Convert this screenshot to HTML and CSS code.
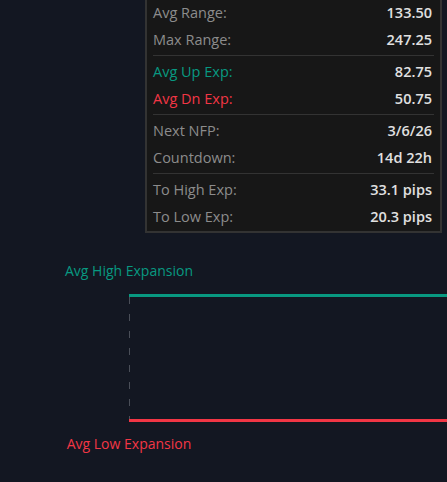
FILE: index.html
```html
<!DOCTYPE html>
<html lang="en">
  <head>
    <meta charset="UTF-8" />
    <meta name="viewport" content="width=device-width, initial-scale=1.0" />
    <title>NFP Expansion</title>
    <link rel="stylesheet" href="styles.css">
  </head>
  <body>
    <section class="stats">
      <div class="stats-row">
        <span class="stats-label">Avg Range:</span>
        <span class="stats-value">133.50</span>
      </div>
      <div class="stats-row">
        <span class="stats-label">Max Range:</span>
        <span class="stats-value">247.25</span>
      </div>
      <hr class="stats-sep" />
      <div class="stats-row">
        <span class="stats-label is-up">Avg Up Exp:</span>
        <span class="stats-value">82.75</span>
      </div>
      <div class="stats-row">
        <span class="stats-label is-down">Avg Dn Exp:</span>
        <span class="stats-value">50.75</span>
      </div>
      <hr class="stats-sep" />
      <div class="stats-row">
        <span class="stats-label">Next NFP:</span>
        <span class="stats-value">3/6/26</span>
      </div>
      <div class="stats-row">
        <span class="stats-label">Countdown:</span>
        <span class="stats-value">14d 22h</span>
      </div>
      <hr class="stats-sep" />
      <div class="stats-row">
        <span class="stats-label">To High Exp:</span>
        <span class="stats-value">33.1 pips</span>
      </div>
      <div class="stats-row">
        <span class="stats-label">To Low Exp:</span>
        <span class="stats-value">20.3 pips</span>
      </div>
    </section>

    <section class="chart">
      <div class="exp-label is-up">Avg High Expansion</div>
      <div class="exp-box"></div>
      <div class="exp-label is-down">Avg Low Expansion</div>
    </section>
  </body>
</html>
```

FILE: styles.css
```css
:root {
  --main-font: "Open Sans", "DejaVu Sans", sans-serif;
  --bg-color: #131722;
  --panel-color: #171717;
  --panel-border: #333;
  --label-color: #8c8c8c;
  --value-color: #e0e0e0;
  --up-color: #089981;
  --down-color: #f23645;
}

html {
  box-sizing: border-box;
  font-family: var(--main-font);
  font-size: 14px;
}

*,
*:before,
*:after {
  box-sizing: inherit;
}

body {
  margin: 0;
  height: 482px;
  overflow: hidden;
  background-color: var(--bg-color);
}

/* stats panel */
.stats {
  margin: -3px 0 0 145px;
  width: 297px;
  padding: 0 8px 1px 6px;
  font-size: 14.5px;
  background-color: var(--panel-color);
  border: 2px solid var(--panel-border);
}

.stats-row {
  display: flex;
  justify-content: space-between;
  align-items: center;
  height: 27px;
}

.stats-label {
  color: var(--label-color);
}

.stats-value {
  color: var(--value-color);
  font-weight: 600;
}

.stats-sep {
  margin: 2px -2px 2px 0;
  border: 0;
  height: 1px;
  background-color: #333;
}

.is-up {
  color: var(--up-color);
}

.is-down {
  color: var(--down-color);
}

/* chart */
.chart {
  padding-top: 28px;
}

.exp-label {
  width: 258px;
  text-align: center;
  line-height: 20px;
}

.exp-box {
  margin: 13px 0 12px 129px;
  height: 128px;
  border-top: 3px solid var(--up-color);
  border-bottom: 3px solid var(--down-color);
  background-image: repeating-linear-gradient(
    to bottom,
    #4a4e58 0 7px,
    transparent 7px 17px
  );
  background-size: 1px 100%;
  background-repeat: no-repeat;
}
```
